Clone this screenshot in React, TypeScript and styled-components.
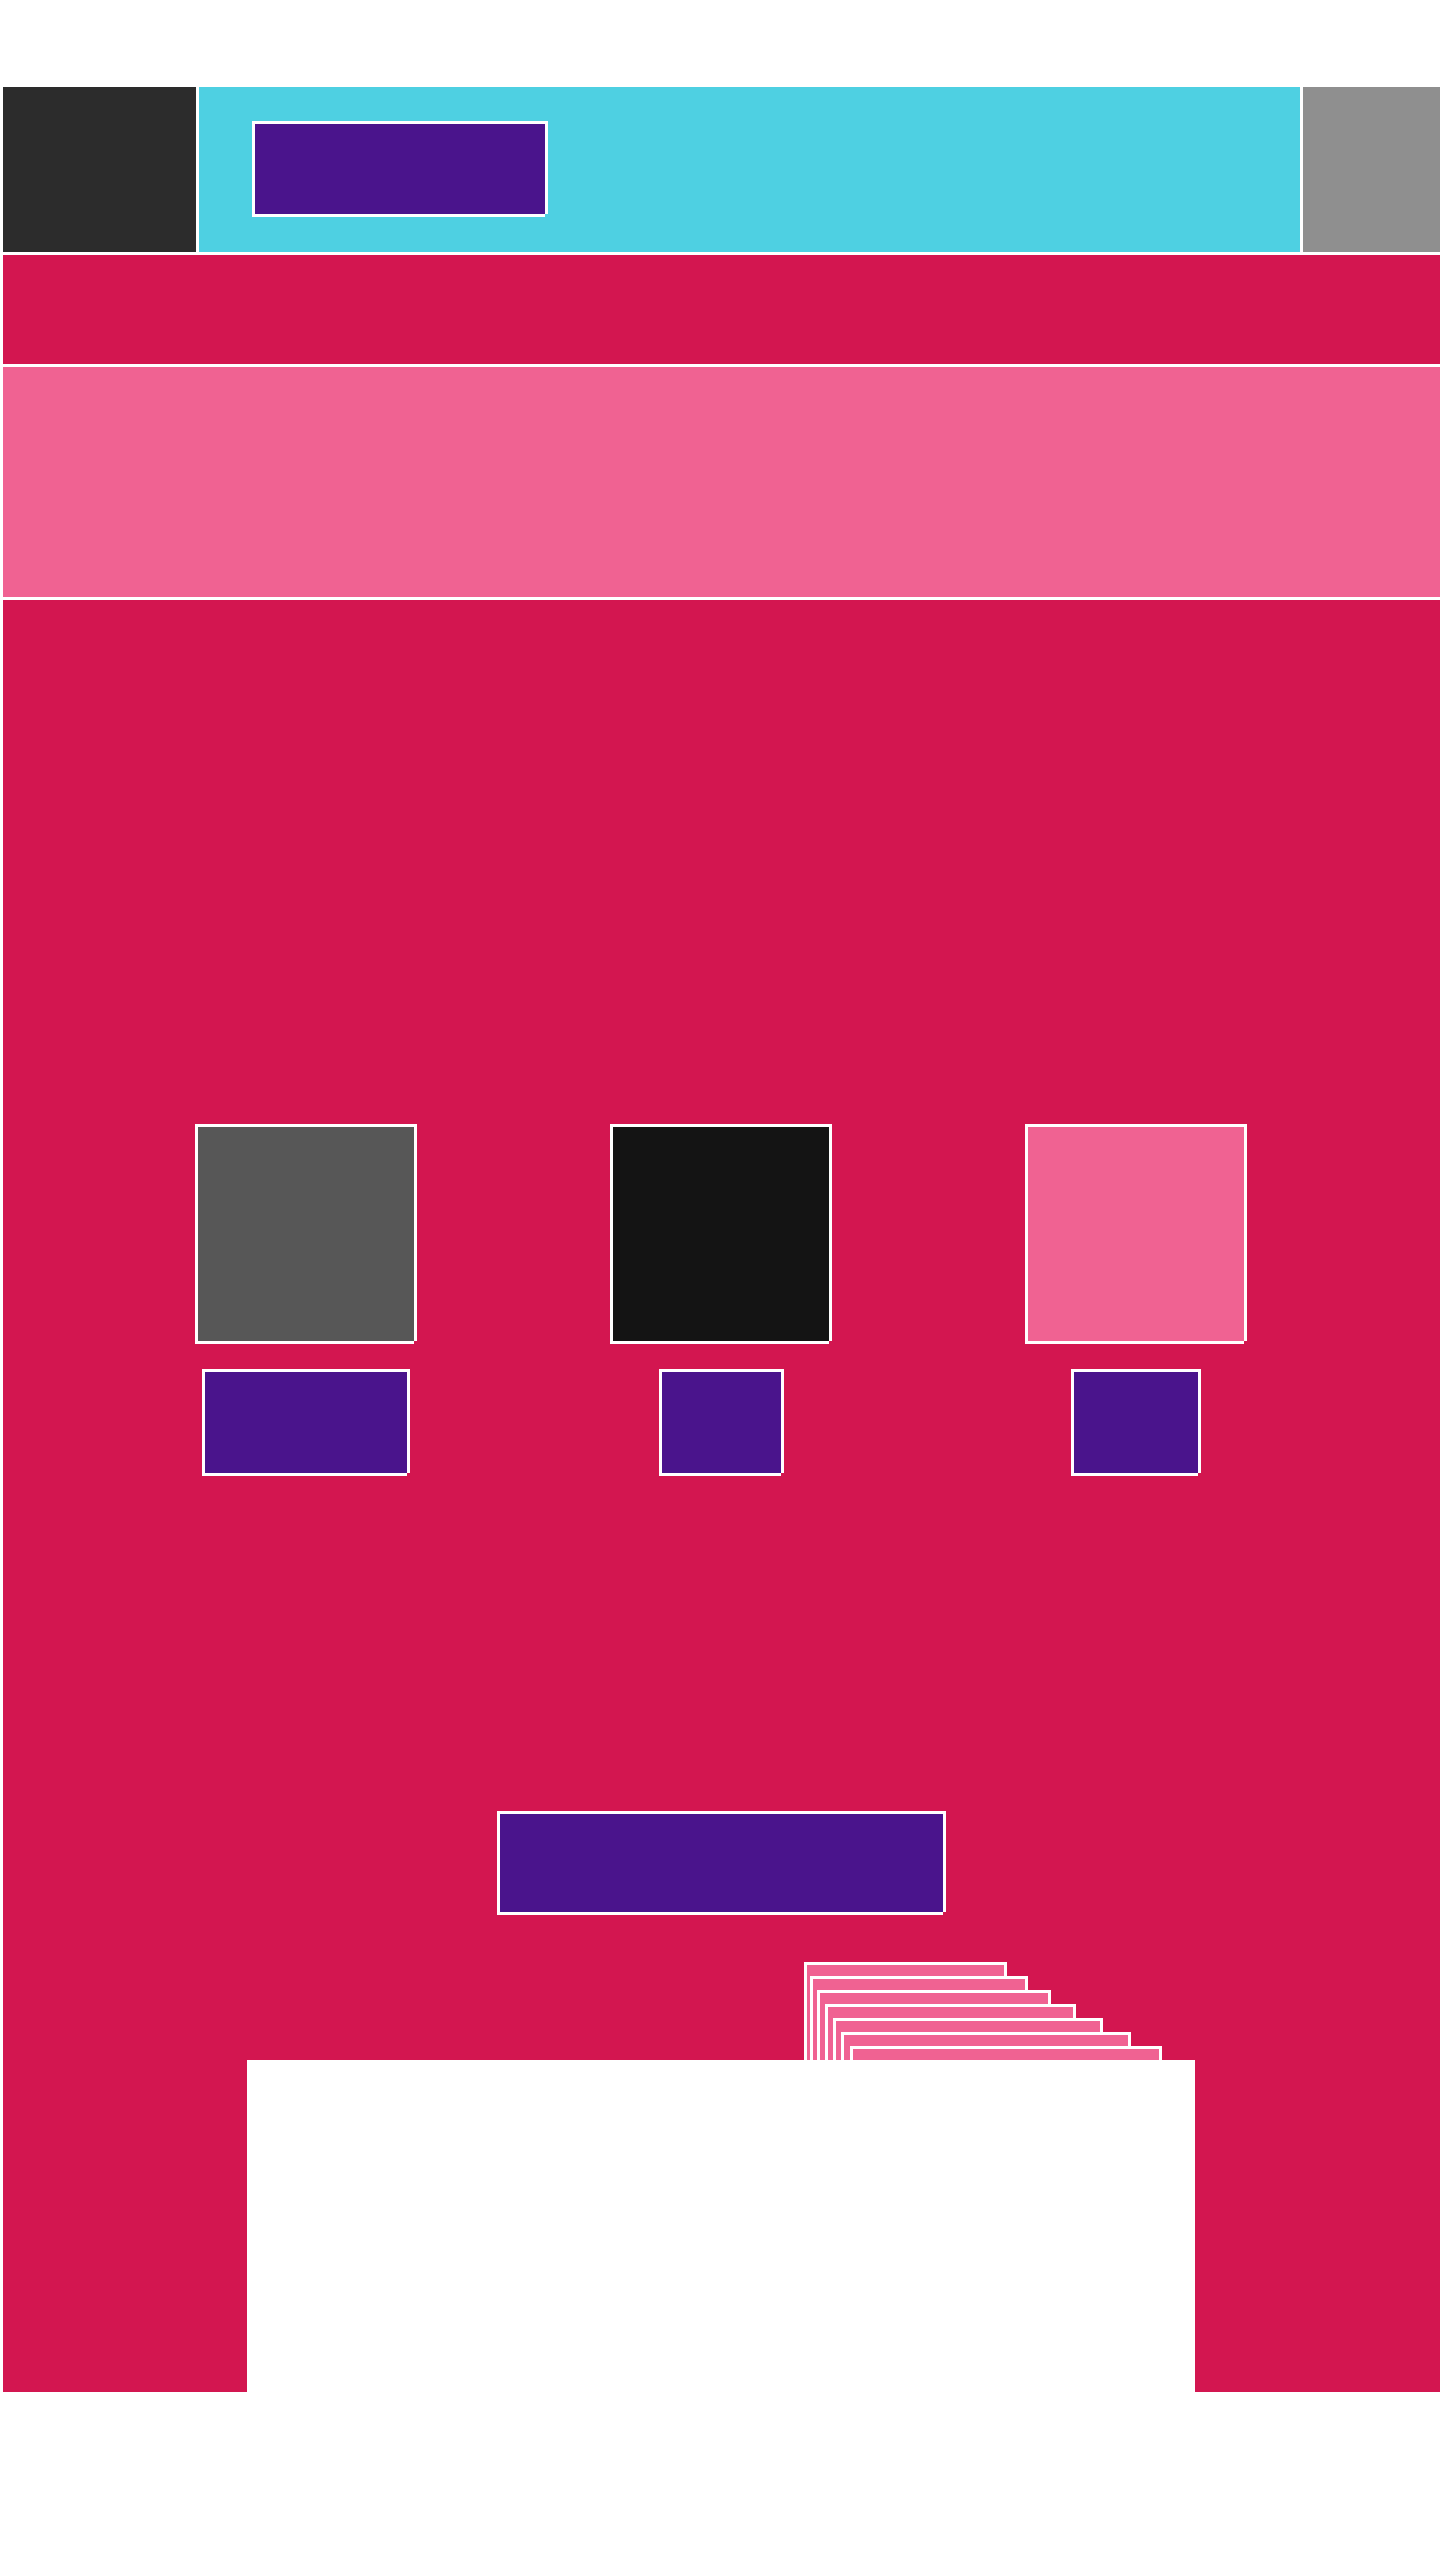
import React from "react";
import styled, { createGlobalStyle } from "styled-components";

const GlobalStyle = createGlobalStyle`
  html, body {
    margin: 0;
    padding: 0;
    background: #ffffff;
    font-family: Inter, "Liberation Sans", sans-serif;
  }
`;

const C = {
  crimson: "#d31650",
  pink: "#f06292",
  cyan: "#4ed0e2",
  dark: "#2c2c2c",
  gray: "#8f8f8f",
  cardGray: "#575757",
  black: "#141414",
  purple: "#4a148c",
};

const Page = styled.div`
  width: 1437px;
  padding: 87px 0 0 3px;
  display: flex;
  flex-direction: column;
  gap: 3px;
`;

const Header = styled.header`
  display: flex;
  gap: 3px;
  height: 165px;
`;

const HeaderBlock = styled.div<{ $bg: string; $w?: number }>`
  background: ${(p) => p.$bg};
  ${(p) => (p.$w ? `width: ${p.$w}px; flex: none;` : "flex: 1;")}
  box-sizing: border-box;
`;

const HeaderCenter = styled(HeaderBlock)`
  padding: 34px 0 0 53px;
`;

const framed = `
  box-sizing: border-box;
  border-top: 3px solid #ffffff;
  border-left: 3px solid #ffffff;
  box-shadow: 3px 0 0 #ffffff, 0 3px 0 #ffffff;
`;

const HeaderButton = styled.div`
  ${framed}
  width: 293px;
  height: 93px;
  background: ${C.purple};
`;

const Band = styled.div<{ $bg: string; $h: number }>`
  background: ${(p) => p.$bg};
  height: ${(p) => p.$h}px;
`;

const Main = styled.main`
  background: ${C.crimson};
  height: 1792px;
  padding-top: 524px;
  box-sizing: border-box;
  display: flex;
  flex-direction: column;
`;

const CardGrid = styled.div`
  display: grid;
  grid-template-columns: repeat(3, 415px);
  padding-left: 94px;
`;

const Column = styled.div`
  display: flex;
  flex-direction: column;
  align-items: center;
  gap: 28px;
`;

const Card = styled.div<{ $bg: string }>`
  ${framed}
  width: 219px;
  height: 217px;
  background: ${(p) => p.$bg};
`;

const SmallButton = styled.div<{ $w: number }>`
  ${framed}
  width: ${(p) => p.$w}px;
  height: 104px;
  background: ${C.purple};
`;

const BigButton = styled.div`
  ${framed}
  width: 446px;
  height: 101px;
  margin: 338px 0 0 494px;
  background: ${C.purple};
`;

const Stack = styled.div`
  position: relative;
  height: 98px;
  margin-top: 50px;
  overflow: hidden;
`;

const StackBar = styled.div`
  ${framed}
  position: absolute;
  height: 160px;
  background: ${C.pink};
`;

const WhiteBox = styled.div`
  width: 948px;
  height: 332px;
  margin-left: 244px;
  background: #ffffff;
`;

const columns = [
  { card: C.cardGray, btn: 205 },
  { card: C.black, btn: 122 },
  { card: C.pink, btn: 127 },
];

const bars = [
  { left: 801, width: 200 },
  { left: 807, width: 215 },
  { left: 814, width: 231 },
  { left: 822, width: 248 },
  { left: 830, width: 267 },
  { left: 838, width: 287 },
  { left: 847, width: 309 },
];

export default function App() {
  return (
    <>
      <GlobalStyle />
      <Page>
        <Header>
          <HeaderBlock $bg={C.dark} $w={193} />
          <HeaderCenter $bg={C.cyan}>
            <HeaderButton />
          </HeaderCenter>
          <HeaderBlock $bg={C.gray} $w={137} />
        </Header>
        <Band $bg={C.crimson} $h={109} />
        <Band $bg={C.pink} $h={230} />
        <Main>
          <CardGrid>
            {columns.map((c, i) => (
              <Column key={i}>
                <Card $bg={c.card} />
                <SmallButton $w={c.btn} />
              </Column>
            ))}
          </CardGrid>
          <BigButton />
          <Stack>
            {bars.map((b, i) => (
              <StackBar key={i} style={{ left: b.left, top: i * 14, width: b.width }} />
            ))}
          </Stack>
          <WhiteBox />
        </Main>
      </Page>
    </>
  );
}
